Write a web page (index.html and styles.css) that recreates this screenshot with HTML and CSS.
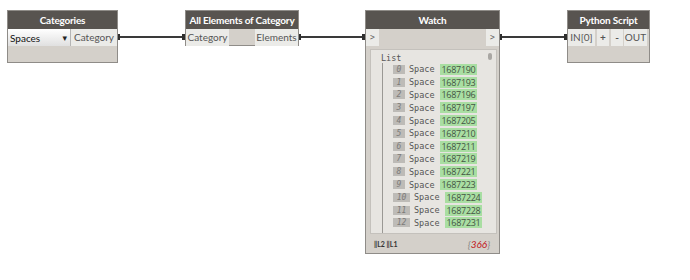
FILE: index.html
```html
<!DOCTYPE html>
<html lang="en">
<head>
    <meta charset="UTF-8">
    <title>Dynamo Graph</title>
    <link rel="stylesheet" href="styles.css">
</head>
<body>
    <div class="canvas">
        <!-- wires between ports -->
        <svg class="wires" width="690" height="280">
            <g stroke="#3a3a3a" stroke-width="2" fill="none">
                <line x1="118" y1="37" x2="184" y2="37"/>
                <line x1="299" y1="37" x2="364" y2="37"/>
                <line x1="500" y1="37" x2="566" y2="37"/>
            </g>
            <g fill="#2e2e2e">
                <rect x="117" y="34" width="3" height="6"/>
                <rect x="182" y="34" width="3" height="6"/>
                <rect x="298" y="34" width="3" height="6"/>
                <rect x="362" y="34" width="3" height="6"/>
                <rect x="499" y="34" width="3" height="6"/>
                <rect x="564" y="34" width="3" height="6"/>
            </g>
        </svg>

        <!-- Categories node -->
        <div class="node node-categories">
            <div class="node-title">Categories</div>
            <div class="node-row">
                <div class="dropdown">
                    <span>Spaces</span>
                    <span class="arrow">&#9662;</span>
                </div>
                <div class="port port-out">Category</div>
            </div>
            <div class="node-foot"></div>
        </div>

        <!-- All Elements of Category node -->
        <div class="node node-elements">
            <div class="node-title">All Elements of Category</div>
            <div class="node-row">
                <div class="port">Category</div>
                <div class="spacer"></div>
                <div class="port port-out">Elements</div>
            </div>
        </div>

        <!-- Watch node -->
        <div class="node node-watch">
            <div class="node-title">Watch</div>
            <div class="node-row">
                <div class="port port-arrow">&gt;</div>
                <div class="spacer"></div>
                <div class="port port-arrow">&gt;</div>
            </div>
            <div class="watch-box">
                <div class="scroll-thumb"></div>
                <div class="list-label">List</div>
                <div class="list-items" id="listItems"></div>
            </div>
            <div class="watch-foot">
                <span class="levels">&#8214;L2 &#8214;L1</span>
                <span class="count">{<em>366</em>}</span>
            </div>
        </div>

        <!-- Python Script node -->
        <div class="node node-python">
            <div class="node-title">Python Script</div>
            <div class="node-row">
                <div class="port port-in">IN[0]</div>
                <div class="port btn">+</div>
                <div class="port btn">-</div>
                <div class="port port-out">OUT</div>
            </div>
            <div class="node-foot"></div>
        </div>
    </div>

    <script>
        // Element ids shown in the watch list
        const ids = [1687190, 1687193, 1687196, 1687197, 1687205, 1687210, 1687211,
                     1687219, 1687221, 1687223, 1687224, 1687228, 1687231];
        const list = document.getElementById("listItems");
        ids.forEach((id, i) => {
            const wide = i >= 10 ? " wide" : "";
            list.innerHTML += `<div class="item${wide}"><span class="idx">${i}</span><span class="kind">Space</span><span class="val">${id}</span></div>`;
        });
    </script>
</body>
</html>
```

FILE: styles.css
```css
/* Page / canvas */
body {
    margin: 0;
    background: #fff;
    font-family: 'Lato', 'DejaVu Sans', sans-serif;
}

.canvas {
    position: relative;
    width: 690px;
    height: 280px;
}

.wires {
    position: absolute;
    left: 0;
    top: 0;
}

/* Generic node */
.node {
    position: absolute;
    top: 10px;
    background: #d4d0ca;
    border: 1px solid #8f8c88;
    box-sizing: border-box;
    display: flex;
    flex-direction: column;
}

.node-title {
    height: 18px;
    line-height: 18px;
    background: #585450;
    color: #fff;
    font-size: 10px;
    font-weight: bold;
    letter-spacing: -0.2px;
    text-align: center;
    white-space: nowrap;
}

.node-row {
    display: flex;
    height: 17px;
}

.node-foot {
    height: 16px;
}

.spacer {
    flex: 1;
}

.port {
    background: #ebebe8;
    color: #555;
    font-size: 10px;
    line-height: 17px;
    padding: 0 3px;
    white-space: nowrap;
}

.port-out {
    margin-left: auto;
}

/* Categories */
.node-categories {
    left: 7px;
    width: 111px;
    height: 53px;
}

.dropdown {
    width: 66px;
    display: flex;
    justify-content: space-between;
    align-items: center;
    padding: 0 3px 0 2px;
    box-sizing: border-box;
    background: linear-gradient(#ffffff, #e0e0e0);
    border-right: 1px solid #b5b5b5;
    font-size: 10px;
    color: #111;
}

.dropdown .arrow {
    font-size: 9px;
    color: #222;
}

.node-categories .port-out {
    flex: 1;
    text-align: center;
}

/* All Elements of Category */
.node-elements {
    left: 185px;
    width: 114px;
    height: 36px;
}

.node-elements .port {
    width: 43px;
    padding: 0;
    text-align: center;
}

/* Watch */
.node-watch {
    left: 365px;
    width: 135px;
    height: 244px;
}

.port-arrow {
    width: 13px;
    padding: 0;
    text-align: center;
    font-family: 'DejaVu Sans Mono', monospace;
    font-size: 8px;
    color: #666;
}

.watch-box {
    position: relative;
    margin: 3px 2px 0 4px;
    height: 183px;
    background: #e7e5e1;
    border: 1px solid #c4c1bc;
    overflow: hidden;
    font-family: 'DejaVu Sans Mono', monospace;
    font-size: 8.5px;
    color: #555;
}

.scroll-thumb {
    position: absolute;
    right: 4px;
    top: 3px;
    width: 4px;
    height: 7px;
    background: #a9a7a3;
    border-radius: 2px;
}

.list-label {
    padding: 3px 0 0 10px;
    height: 10px;
    line-height: 10px;
}

.list-items {
    margin-left: 11px;
    border-left: 1px solid #9a9894;
    padding: 0 0 0 10px;
    height: 172px;
}

.item {
    display: flex;
    align-items: center;
    height: 12.8px;
}

.idx {
    display: inline-block;
    width: 12px;
    height: 9px;
    line-height: 9px;
    background: #bdbbb7;
    color: #7c7a77;
    font-style: italic;
    text-align: center;
    font-size: 8px;
}

.item.wide .idx {
    width: 17px;
}

.kind {
    margin-left: 4px;
    width: 31px;
}

.val {
    background: #a9dea2;
    color: #454;
    font-family: 'Open Sans', 'DejaVu Sans', sans-serif;
    font-size: 9px;
    letter-spacing: -0.3px;
    height: 11px;
    line-height: 11px;
    padding: 0 2px 0 1.5px;
}

.watch-foot {
    display: flex;
    justify-content: space-between;
    align-items: center;
    height: 19px;
    padding: 0 9px 0 8px;
    font-size: 7px;
}

.levels {
    font-weight: bold;
    color: #333;
}

.count {
    color: #888;
    font-size: 10px;
    font-style: italic;
}

.count em {
    color: #c0141a;
}

/* Python Script */
.node-python {
    left: 567px;
    width: 83px;
    height: 53px;
}

.node-python .port-in {
    width: 27px;
    padding: 0;
    text-align: center;
}

.node-python .btn {
    margin-left: 2px;
    width: 12px;
    padding: 0;
    text-align: center;
    font-weight: bold;
}

.node-python .port-out {
    width: 23px;
    margin-right: 2px;
    padding: 0;
    text-align: center;
}
```
